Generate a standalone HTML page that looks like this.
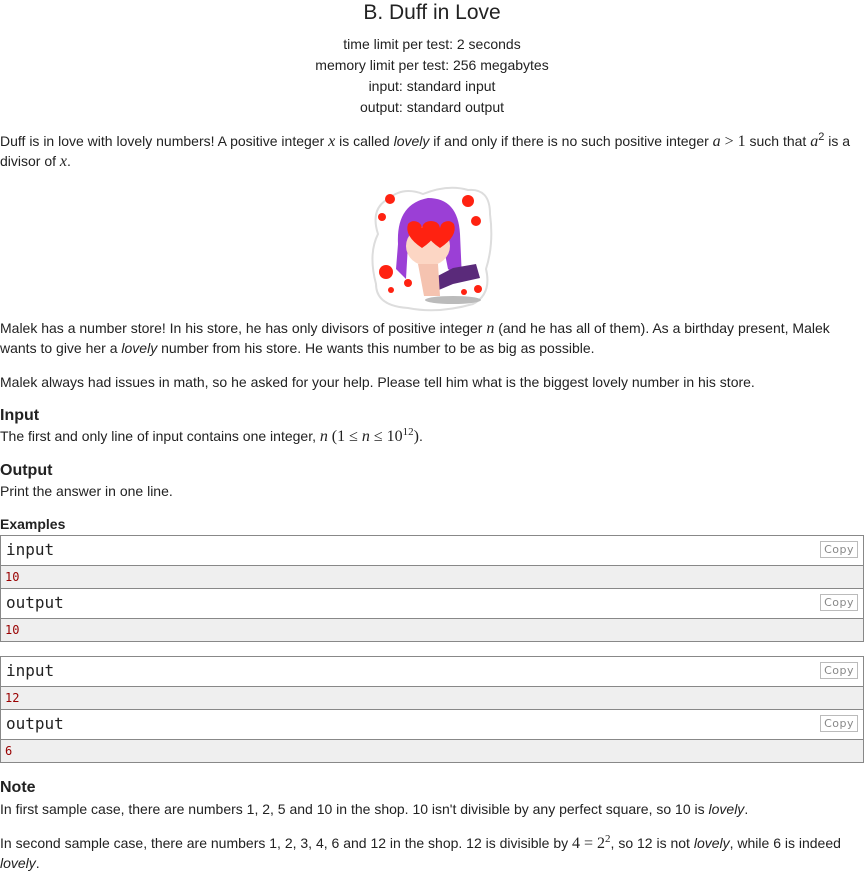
<!DOCTYPE html>
<html><head><style>
body{margin:0;width:864px;height:871px;background:#fff;font-family:"Liberation Sans",sans-serif;font-size:14px;color:#222;position:relative;overflow:hidden}
sup{line-height:0;font-size:11px;vertical-align:6px}
.a{position:absolute;left:0;white-space:nowrap}
.c{position:absolute;left:0;width:864px;text-align:center}
.m{font-family:"Liberation Serif",serif;font-style:italic;font-size:16px;line-height:0}
.r{font-family:"Liberation Serif",serif;font-size:16px;line-height:0}
h3{position:absolute;left:0;margin:0;font-size:16px;font-weight:bold}
.box{position:absolute;left:0;width:862px;border:1px solid #888}
.hd{height:29px;border-bottom:1px solid #888;font-family:"DejaVu Sans Mono","Liberation Mono",monospace;font-size:16px;line-height:28px;padding-left:5px;position:relative;background:#fff}
.dt{height:22px;border-bottom:1px solid #888;background:#efefef;font-family:"DejaVu Sans Mono","Liberation Mono",monospace;font-size:12px;line-height:22px;padding-left:4px;color:#900}
.box>div:last-child{border-bottom:none}
.cp{position:absolute;right:5px;top:5px;border:1px solid #bbb;font-family:"DejaVu Sans","Liberation Sans",sans-serif;font-size:11px;color:#888;padding:1px 3px;line-height:13px;letter-spacing:.5px}
</style></head><body>
<div class="c" style="top:1px;font-size:21px;line-height:24px">B. Duff in Love</div>
<div class="c" style="top:34px;line-height:21px">time limit per test: 2 seconds<br>memory limit per test: 256 megabytes<br>input: standard input<br>output: standard output</div>
<div class="a" style="top:131px;line-height:20px">Duff is in love with lovely numbers! A positive integer <span class="m">x</span> is called <i>lovely</i> if and only if there is no such positive integer <span class="m">a</span> <span class="r">&gt; 1</span> such that <span class="m">a</span><sup>2</sup> is a<br>divisor of <span class="m">x</span>.</div>
<svg style="position:absolute;left:368px;top:184px" width="126" height="132" viewBox="0 0 126 132">
<path d="M20 15 Q35 2 55 10 Q80 0 100 6 Q122 4 122 30 Q126 60 118 85 Q124 110 105 120 Q70 130 40 124 Q8 122 8 100 Q0 70 10 50 Q2 25 20 15Z" fill="#fff" stroke="#ddd" stroke-width="2"/>
<ellipse cx="85" cy="116" rx="28" ry="4" fill="#bbb"/>
<path d="M30 60 Q28 20 60 14 Q90 14 92 50 L94 95 L80 85 L75 60 L40 60 L38 95 L28 85Z" fill="#9b3fd6"/>
<ellipse cx="60" cy="62" rx="22" ry="20" fill="#fcd6c4"/>
<path d="M62 96 L85 84 L108 80 L112 94 L85 100 L66 108Z" fill="#5a2a7a"/>
<path d="M50 80 L70 80 L72 112 L56 112Z" fill="#f5c3b0"/>
<g fill="#f21">
<path d="M40 40 a8 8 0 0 1 14 4 a8 8 0 0 1 14 -4 q4 12 -14 24 q-18 -12 -14 -24z"/>
<path d="M58 40 a8 8 0 0 1 14 4 a8 8 0 0 1 14 -4 q4 12 -14 24 q-18 -12 -14 -24z"/>
<circle cx="22" cy="15" r="5"/><circle cx="100" cy="17" r="6"/><circle cx="14" cy="33" r="4"/><circle cx="108" cy="37" r="5"/>
<circle cx="18" cy="88" r="7"/><circle cx="40" cy="99" r="4"/><circle cx="23" cy="106" r="3"/><circle cx="110" cy="105" r="4"/><circle cx="96" cy="108" r="3"/>
</g></svg>
<div class="a" style="top:318px;line-height:20px">Malek has a number store! In his store, he has only divisors of positive integer <span class="m">n</span> (and he has all of them). As a birthday present, Malek<br>wants to give her a <i>lovely</i> number from his store. He wants this number to be as big as possible.</div>
<div class="a" style="top:372px;line-height:20px">Malek always had issues in math, so he asked for your help. Please tell him what is the biggest lovely number in his store.</div>
<h3 style="top:407px">Input</h3>
<div class="a" style="top:426px;line-height:20px">The first and only line of input contains one integer, <span class="m">n</span> <span class="r">(1 ≤ <i>n</i> ≤ 10<sup>12</sup>)</span>.</div>
<h3 style="top:462px">Output</h3>
<div class="a" style="top:481px;line-height:20px">Print the answer in one line.</div>
<div class="a" style="top:516px;font-weight:bold;font-size:14px">Examples</div>
<div class="box" style="top:535px"><div class="hd">input<span class="cp">Copy</span></div><div class="dt">10</div><div class="hd">output<span class="cp">Copy</span></div><div class="dt">10</div></div>
<div class="box" style="top:656px"><div class="hd">input<span class="cp">Copy</span></div><div class="dt">12</div><div class="hd">output<span class="cp">Copy</span></div><div class="dt">6</div></div>
<h3 style="top:779px">Note</h3>
<div class="a" style="top:799px;line-height:20px">In first sample case, there are numbers 1, 2, 5 and 10 in the shop. 10 isn't divisible by any perfect square, so 10 is <i>lovely</i>.</div>
<div class="a" style="top:833px;line-height:20px">In second sample case, there are numbers 1, 2, 3, 4, 6 and 12 in the shop. 12 is divisible by <span class="r">4 = 2<sup>2</sup></span>, so 12 is not <i>lovely</i>, while 6 is indeed<br><i>lovely</i>.</div>
</body></html>
